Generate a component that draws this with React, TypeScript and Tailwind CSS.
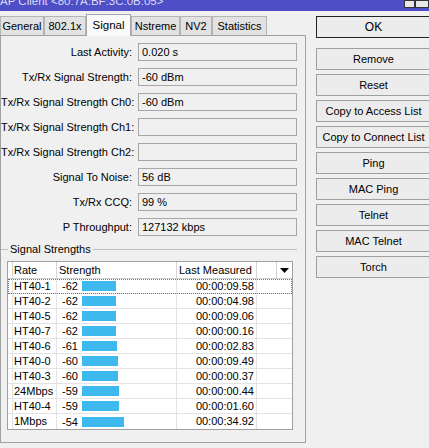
import React from 'react';

const fields: [string, string][] = [
  ['Last Activity:', '0.020 s'],
  ['Tx/Rx Signal Strength:', '-60 dBm'],
  ['Tx/Rx Signal Strength Ch0:', '-60 dBm'],
  ['Tx/Rx Signal Strength Ch1:', ''],
  ['Tx/Rx Signal Strength Ch2:', ''],
  ['Signal To Noise:', '56 dB'],
  ['Tx/Rx CCQ:', '99 %'],
  ['P Throughput:', '127132 kbps'],
];

const rates: [string, number, string][] = [
  ['HT40-1', -62, '00:00:09.58'],
  ['HT40-2', -62, '00:00:04.98'],
  ['HT40-5', -62, '00:00:09.06'],
  ['HT40-7', -62, '00:00:00.16'],
  ['HT40-6', -61, '00:00:02.83'],
  ['HT40-0', -60, '00:00:09.49'],
  ['HT40-3', -60, '00:00:00.37'],
  ['24Mbps', -59, '00:00:00.44'],
  ['HT40-4', -59, '00:00:01.60'],
  ['1Mbps', -54, '00:00:34.92'],
];

const tabs = [
  { name: 'General', w: 'w-[44px]' },
  { name: '802.1x', w: 'w-[42px]' },
  { name: 'Signal', w: 'w-[45px]', active: true },
  { name: 'Nstreme', w: 'w-[49px]' },
  { name: 'NV2', w: 'w-[32px]' },
  { name: 'Statistics', w: 'w-[55px]' },
];

const buttons = ['Remove', 'Reset', 'Copy to Access List', 'Copy to Connect List', 'Ping', 'MAC Ping', 'Telnet', 'MAC Telnet', 'Torch'];

function Field({ label, value }: { label: string; value: string }) {
  return (
    <div className="flex items-center h-[18px]">
      <div className="w-[131px] text-right whitespace-nowrap">{label}</div>
      <div className="ml-[6px] w-[159px] h-[18px] border border-[#a7a7a7] bg-[#f0f0f0] pl-[3px] leading-[16px]">
        {value}
      </div>
    </div>
  );
}

export default function App() {
  return (
    <div className="w-[429px] h-[448px] overflow-hidden bg-[#f0f0f0] text-[11px] text-black font-['Liberation_Sans',Arial,sans-serif]">
      {/* Title bar */}
      <div className="h-[11px] bg-[#4e4ec6] flex items-start overflow-hidden">
        <div className="-mt-[4px] leading-[11px] text-[11.5px] text-[#dcdcf5] whitespace-nowrap">
          AP Client &lt;80:7A:BF:3C:0B:05&gt;
        </div>
        <div className="ml-auto flex">
          <div className="w-[11px] h-[8px] border border-[#333] bg-[#e8e8e8]" />
          <div className="w-[14px] h-[8px] border border-[#333] bg-[#e8e8e8]" />
        </div>
      </div>

      <div className="flex">
        {/* Left side: tabs + panel */}
        <div className="w-[306px] shrink-0">
          <div className="h-[24px] flex items-end">
            {tabs.map((t) =>
              t.active ? (
                <div
                  key={t.name}
                  className={`${t.w} h-[22px] border border-b-0 border-[#a7a7a7] bg-[#fafafa] text-center leading-[20px] text-[11.5px] -mb-px relative z-10`}
                >
                  {t.name}
                </div>
              ) : (
                <div
                  key={t.name}
                  className={`${t.w} h-[19px] border border-b-0 border-[#b4b4b4] bg-[#e2e2e2] text-center leading-[18px] text-[11px]`}
                >
                  {t.name}
                </div>
              )
            )}
          </div>

          <div className="h-[408px] border border-[#a0a0a0] pt-[7px]">
            <div className="flex flex-col gap-[7px]">
              {fields.map(([l, v]) => (
                <Field key={l} label={l} value={v} />
              ))}
            </div>

            {/* Group header */}
            <div className="mt-[7px] h-[12px] flex items-center">
              <div className="w-[7px] h-px bg-[#c0c0c0]" />
              <div className="px-[2px] leading-[12px]">Signal Strengths</div>
              <div className="flex-1 mr-[8px] h-px bg-[#c0c0c0]" />
            </div>

            {/* List */}
            <div className="mt-[6px] ml-[6px] w-[286px] border border-[#a0a0a0] bg-white">
              <div className="flex h-[17px] border-b border-[#d0d0d0] leading-[16px]">
                <div className="w-[5px] border-r border-[#d5d5d5]" />
                <div className="w-[44px] border-r border-[#d5d5d5] pl-[1px]">Rate</div>
                <div className="w-[120px] border-r border-[#d5d5d5] pl-[2px]">Strength</div>
                <div className="w-[80px] border-r border-[#d5d5d5] pl-[2px] whitespace-nowrap">Last Measured</div>
                <div className="w-[20px] border-r border-[#d5d5d5]" />
                <div className="flex-1 flex items-center justify-center">
                  <svg width="9" height="5" viewBox="0 0 9 5">
                    <path d="M0 0h9L4.5 5z" fill="#000" />
                  </svg>
                </div>
              </div>
              {rates.map(([rate, s, t], i) => (
                <div
                  key={rate}
                  className={`flex h-[15px] border-b border-[#e3e3e3] last:border-b-0 leading-[14px] ${
                    i === 0 ? 'outline outline-1 outline-dotted outline-[#777] -outline-offset-1' : ''
                  }`}
                >
                  <div className="w-[5px] border-r border-[#e3e3e3]" />
                  <div className="w-[44px] border-r border-[#e3e3e3] pl-[1px]">{rate}</div>
                  <div className="w-[120px] border-r border-[#e3e3e3] flex items-center">
                    <span className="w-[25px] pl-[5px]">{s}</span>
                    <span className="h-[10px] bg-[#3eb9ee]" style={{ width: 96 + s }} />
                  </div>
                  <div className="w-[80px] border-r border-[#e3e3e3] text-right pr-[2px]">{t}</div>
                  <div className="flex-1" />
                </div>
              ))}
            </div>
          </div>
        </div>

        {/* Right side buttons */}
        <div className="ml-[10px] pt-[5px] flex flex-col w-[115px] shrink-0 text-[12px]">
          <div className="h-[22px] border border-[#222] bg-[#ececec] flex items-center justify-center">OK</div>
          <div className="mt-[10px] flex flex-col gap-[4px]">
            {buttons.map((b) => (
              <div
                key={b}
                className="h-[22px] border border-[#9f9f9f] bg-[#ececec] flex items-center justify-center whitespace-nowrap text-[11px]"
              >
                {b}
              </div>
            ))}
          </div>
        </div>
      </div>
    </div>
  );
}
